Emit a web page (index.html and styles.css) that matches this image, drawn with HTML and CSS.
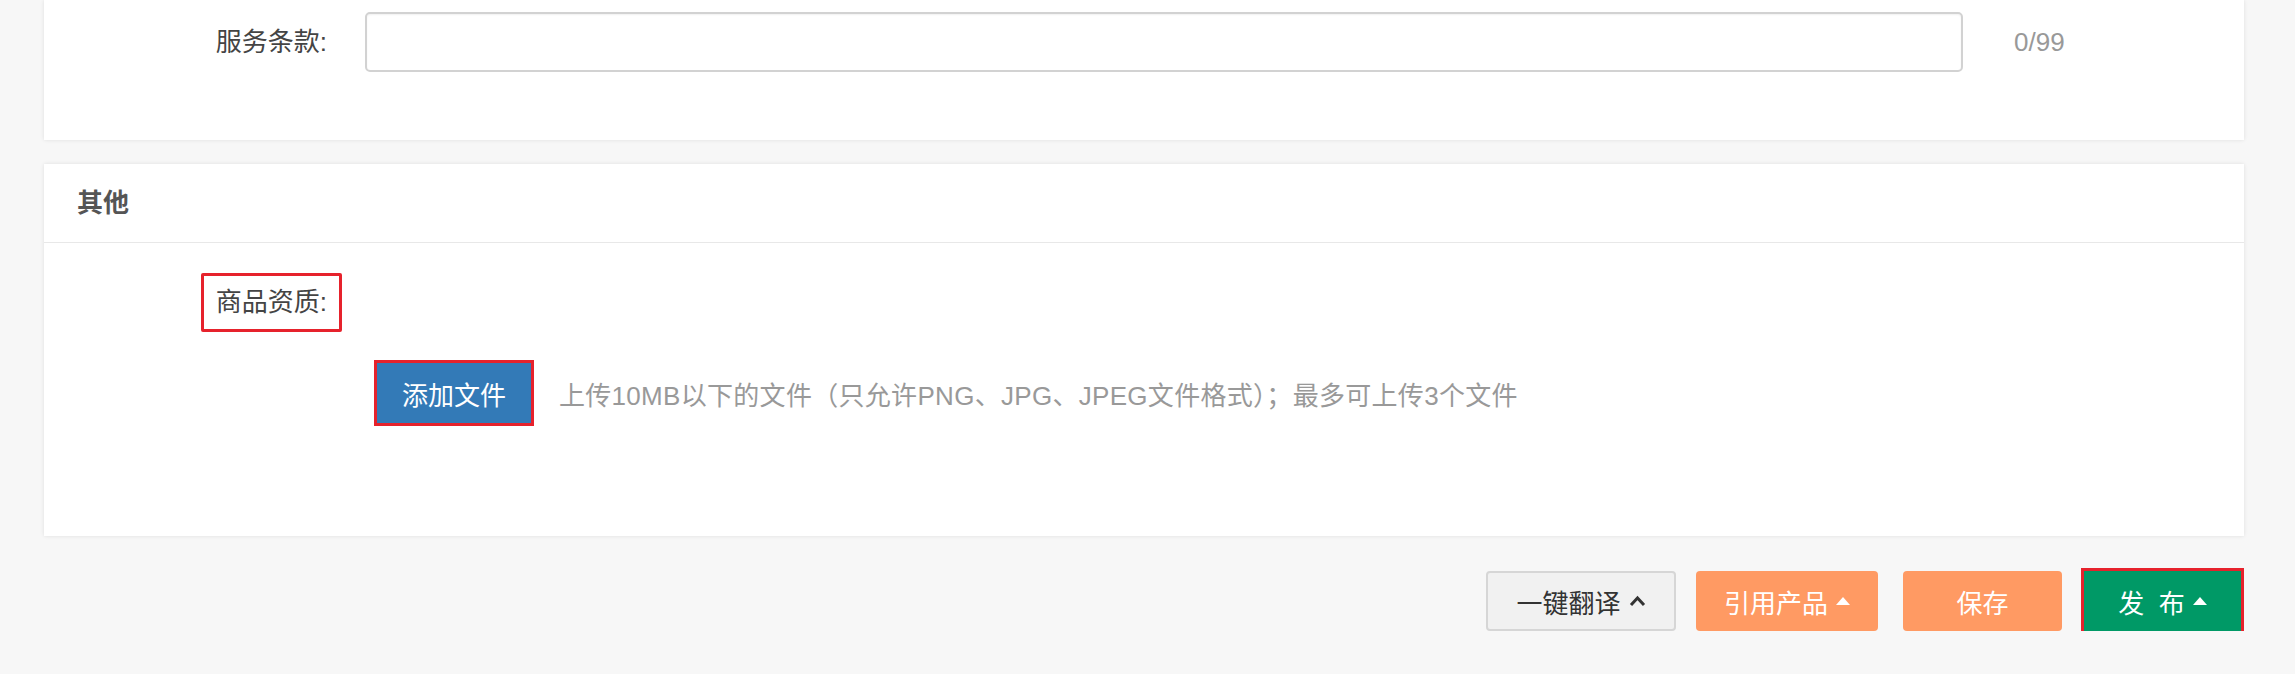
FILE: index.html
```html
<!DOCTYPE html>
<html lang="zh-CN">

<head>
    <meta charset="UTF-8">
    <meta name="viewport" content="width=device-width, initial-scale=1.0">
    <title>发布商品</title>
    <link rel="stylesheet" href="styles.css">
</head>

<body>
    <div class="page">
        <div class="panel panel-first">
            <div class="form-row">
                <label class="form-label" for="terms">服务条款:</label>
                <input class="form-input" type="text" id="terms" name="terms">
                <span class="counter">0/99</span>
            </div>
        </div>

        <div class="panel">
            <div class="panel-heading">其他</div>
            <div class="panel-body">
                <div class="form-row qual-row">
                    <label class="form-label"><span class="mark-label">商品资质:</span></label>
                </div>
                <div class="upload-row">
                    <button class="btn btn-upload marked">添加文件</button>
                    <span class="help">上传10MB以下的文件（只允许PNG、JPG、JPEG文件格式）；最多可上传3个文件</span>
                </div>
            </div>
        </div>

        <div class="actions">
            <button class="btn btn-translate">一键翻译
                <svg class="chevron" width="17" height="12" viewBox="0 0 17 12">
                    <polyline points="2,10 8.5,3 15,10" fill="none" stroke="#333" stroke-width="3" />
                </svg>
            </button>
            <button class="btn btn-orange btn-cite">引用产品 <span class="tri"></span></button>
            <button class="btn btn-orange btn-save">保存</button>
            <button class="btn btn-green marked">发&nbsp;&nbsp;布 <span class="tri"></span></button>
        </div>
    </div>
</body>

</html>
```

FILE: styles.css
```css
body {
    margin: 0;
    padding: 0;
    font-family: 'Liberation Sans', 'Noto Sans CJK SC', sans-serif;
    font-size: 26px;
    background-color: #f7f7f7;
    color: #444;
}

.page {
    padding: 0 51px 0 44px;
}

.panel {
    background-color: #fff;
    box-shadow: 0 0 4px rgba(0, 0, 0, 0.1);
    margin-top: 24px;
}

.panel-first {
    margin-top: 0;
    padding: 12px 0 68px;
}

.panel-heading {
    height: 78px;
    line-height: 78px;
    padding: 0 33px;
    border-bottom: 1px solid #e8e8e8;
    font-weight: bold;
    color: #555;
}

.panel-body {
    padding: 30px 0 113px;
}

.form-row {
    display: flex;
    align-items: center;
    height: 60px;
}

.form-label {
    width: 321px;
    box-sizing: border-box;
    padding-right: 38px;
    text-align: right;
    line-height: 30px;
    color: #444;
}

.form-input {
    width: 1598px;
    height: 60px;
    box-sizing: border-box;
    border: 2px solid #d2d2d2;
    border-radius: 5px;
    box-shadow: inset 0 1px 2px rgba(0, 0, 0, 0.06);
    font-size: 26px;
    padding: 0 16px;
}

.counter {
    margin-left: 51px;
    color: #999;
}

.qual-row {
    height: 59px;
}

.mark-label {
    display: inline-block;
    line-height: 27px;
    padding: 13px 12px;
    border: 3px solid #e6222c;
    border-radius: 2px;
    margin-right: -15px;
}

.upload-row {
    display: flex;
    align-items: center;
    margin-top: 31px;
    padding-left: 333px;
}

.help {
    margin-left: 28px;
    color: #999;
    letter-spacing: 0.3px;
}

.btn {
    height: 60px;
    box-sizing: border-box;
    border: none;
    border-radius: 4px;
    font-family: inherit;
    font-size: 26px;
    color: #fff;
    padding: 0;
    display: inline-flex;
    align-items: center;
    justify-content: center;
    cursor: pointer;
}

.marked {
    outline: 3px solid #e6222c;
}

.btn-upload {
    width: 154px;
    background-color: #337ab7;
    border-radius: 0;
}

.actions {
    display: flex;
    justify-content: flex-end;
    margin-top: 35px;
    padding-right: 3px;
}

.btn-translate {
    width: 190px;
    background-color: #f1f1f1;
    border: 2px solid #d6d6d6;
    color: #333;
}

.chevron {
    margin-left: 8px;
}

.btn-orange {
    background-color: #ff9a63;
}

.btn-cite {
    width: 182px;
    margin-left: 20px;
}

.btn-save {
    width: 159px;
    margin-left: 25px;
}

.btn-green {
    width: 157px;
    margin-left: 22px;
    background-color: #009966;
    border-radius: 0;
}

.tri {
    display: inline-block;
    width: 0;
    height: 0;
    margin-left: 8px;
    border-left: 7px solid transparent;
    border-right: 7px solid transparent;
    border-bottom: 8px solid #fff;
}
```
